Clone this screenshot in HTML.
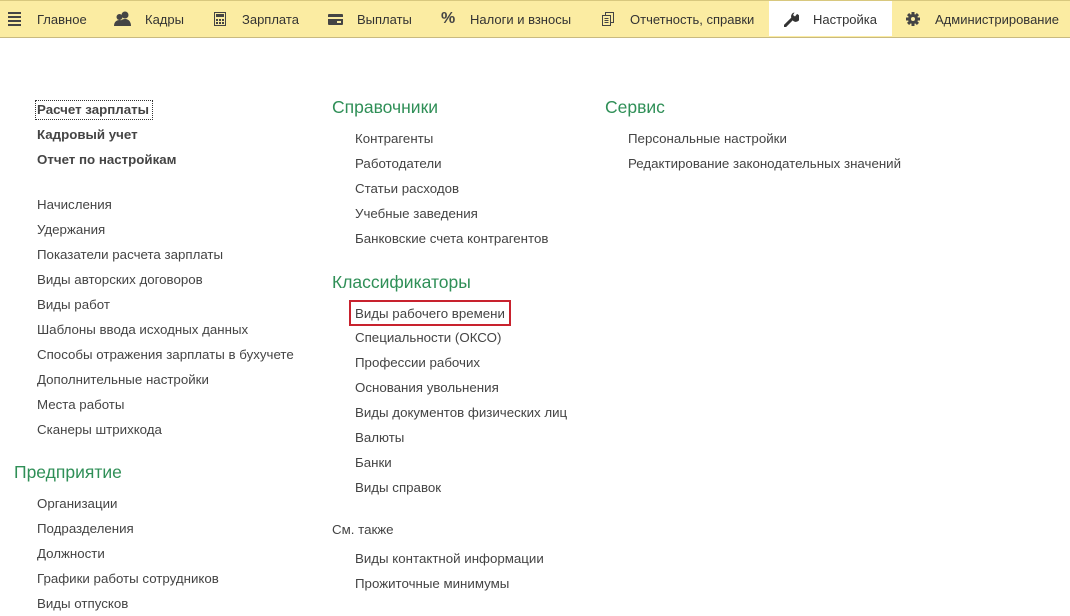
<!DOCTYPE html>
<html><head><meta charset="utf-8"><style>
body{margin:0;width:1070px;height:616px;background:#fff;position:relative;overflow:hidden;font-family:"Liberation Sans",Arial,sans-serif}
.bar{position:absolute;left:0;top:0;width:1070px;height:38px;background:#fbeca2;border-top:1px solid #d8c87e;border-bottom:1px solid #c9ba80;box-sizing:border-box}
.tab{position:absolute;top:1px;height:35px;left:769px;width:123px;background:#fff}
.b{position:absolute;top:12px;font-size:13px;line-height:16px;color:#333;white-space:nowrap}
.ic{position:absolute}
.t{position:absolute;font-size:13.3px;line-height:16px;color:#444;white-space:nowrap;margin-top:1px}
.bd{font-weight:bold;color:#444}
.h{position:absolute;font-size:17.5px;line-height:20px;color:#2f8f57;white-space:nowrap;margin-top:0px}
</style></head><body>
<div class="bar"></div>
<div class="tab"></div>
<svg class="ic" style="left:8px;top:12px" width="13" height="14"><g fill="#444"><rect y="0" width="13" height="2"/><rect y="4" width="13" height="2"/><rect y="8" width="13" height="2"/><rect y="12" width="13" height="2"/></g></svg>
<div class="b" style="left:37px">Главное</div>
<svg class="ic" style="left:114px;top:11px" width="18" height="15"><g fill="#444"><circle cx="11" cy="4" r="3.5"/><path d="M5 15c0-5 3-7 6-7s6 2 6 7z"/><circle cx="5.5" cy="6" r="3"/><path d="M0 15c0-4 2.5-6 5.5-6S11 11 11 15z"/></g></svg>
<div class="b" style="left:145px">Кадры</div>
<svg class="ic" style="left:214px;top:12px" width="12" height="14"><rect x="0.5" y="0.5" width="11" height="13" fill="none" stroke="#444"/><rect x="2" y="2" width="8" height="3" fill="#444"/><g fill="#444"><rect x="2" y="7" width="2" height="2"/><rect x="5" y="7" width="2" height="2"/><rect x="8" y="7" width="2" height="2"/><rect x="2" y="10" width="2" height="2"/><rect x="5" y="10" width="2" height="2"/><rect x="8" y="10" width="2" height="2"/></g></svg>
<div class="b" style="left:242px">Зарплата</div>
<svg class="ic" style="left:328px;top:14px" width="15" height="11"><rect width="15" height="11" rx="1" fill="#444"/><rect x="0" y="3" width="15" height="2" fill="#fbeca2"/><rect x="9" y="7" width="4" height="2" fill="#fbeca2"/></svg>
<div class="b" style="left:357px">Выплаты</div>
<div class="b" style="left:441px;top:11px;font-weight:bold;font-size:16px;color:#444">%</div>
<div class="b" style="left:470px">Налоги и взносы</div>
<svg class="ic" style="left:602px;top:12px" width="12" height="14"><g fill="none" stroke="#444"><rect x="3.5" y="0.5" width="8" height="10"/><rect x="0.5" y="3.5" width="8" height="10" fill="#fbeca2"/><path d="M2.5 6.5h4M2.5 8.5h4M2.5 10.5h4"/></g></svg>
<div class="b" style="left:630px">Отчетность, справки</div>
<svg class="ic" style="left:784px;top:12px" width="15" height="15"><path d="M1 14l7-7" stroke="#333" stroke-width="3" stroke-linecap="round"/><path d="M8 7a4 4 0 1 0 5-5l-2 2.5-2-1.5 1.5-2.5A4 4 0 0 0 8 7z" fill="#333"/></svg>
<div class="b" style="left:813px">Настройка</div>
<svg class="ic" style="left:906px;top:12px" width="14" height="14"><g fill="#444"><circle cx="7" cy="7" r="5"/><rect x="5.5" y="0" width="3" height="14"/><rect x="0" y="5.5" width="14" height="3"/><rect x="5.5" y="0" width="3" height="14" transform="rotate(45 7 7)"/><rect x="5.5" y="0" width="3" height="14" transform="rotate(-45 7 7)"/></g><circle cx="7" cy="7" r="2" fill="#fbeca2"/></svg>
<div class="b" style="left:935px">Администрирование</div>

<div class="t bd" style="left:37px;top:101px;outline:1px dotted #333;outline-offset:1px;padding-right:2px">Расчет зарплаты</div>
<div class="t bd" style="left:37px;top:126px">Кадровый учет</div>
<div class="t bd" style="left:37px;top:151px">Отчет по настройкам</div>
<div class="t" style="left:37px;top:196px">Начисления</div>
<div class="t" style="left:37px;top:221px">Удержания</div>
<div class="t" style="left:37px;top:246px">Показатели расчета зарплаты</div>
<div class="t" style="left:37px;top:271px">Виды авторских договоров</div>
<div class="t" style="left:37px;top:296px">Виды работ</div>
<div class="t" style="left:37px;top:321px">Шаблоны ввода исходных данных</div>
<div class="t" style="left:37px;top:346px">Способы отражения зарплаты в бухучете</div>
<div class="t" style="left:37px;top:371px">Дополнительные настройки</div>
<div class="t" style="left:37px;top:396px">Места работы</div>
<div class="t" style="left:37px;top:421px">Сканеры штрихкода</div>
<div class="h" style="left:14px;top:462px">Предприятие</div>
<div class="t" style="left:37px;top:495px">Организации</div>
<div class="t" style="left:37px;top:520px">Подразделения</div>
<div class="t" style="left:37px;top:545px">Должности</div>
<div class="t" style="left:37px;top:570px">Графики работы сотрудников</div>
<div class="t" style="left:37px;top:595px">Виды отпусков</div>

<div class="h" style="left:332px;top:97px">Справочники</div>
<div class="t" style="left:355px;top:130px">Контрагенты</div>
<div class="t" style="left:355px;top:155px">Работодатели</div>
<div class="t" style="left:355px;top:180px">Статьи расходов</div>
<div class="t" style="left:355px;top:205px">Учебные заведения</div>
<div class="t" style="left:355px;top:230px">Банковские счета контрагентов</div>
<div class="h" style="left:332px;top:272px">Классификаторы</div>
<div style="position:absolute;left:349px;top:300px;width:158px;height:22px;border:2px solid #c8222e"></div>
<div class="t" style="left:355px;top:305px">Виды рабочего времени</div>
<div class="t" style="left:355px;top:329px">Специальности (ОКСО)</div>
<div class="t" style="left:355px;top:354px">Профессии рабочих</div>
<div class="t" style="left:355px;top:379px">Основания увольнения</div>
<div class="t" style="left:355px;top:404px">Виды документов физических лиц</div>
<div class="t" style="left:355px;top:429px">Валюты</div>
<div class="t" style="left:355px;top:454px">Банки</div>
<div class="t" style="left:355px;top:479px">Виды справок</div>
<div class="t" style="left:332px;top:521px">См. также</div>
<div class="t" style="left:355px;top:550px">Виды контактной информации</div>
<div class="t" style="left:355px;top:575px">Прожиточные минимумы</div>

<div class="h" style="left:605px;top:97px">Сервис</div>
<div class="t" style="left:628px;top:130px">Персональные настройки</div>
<div class="t" style="left:628px;top:155px">Редактирование законодательных значений</div>
</body></html>
